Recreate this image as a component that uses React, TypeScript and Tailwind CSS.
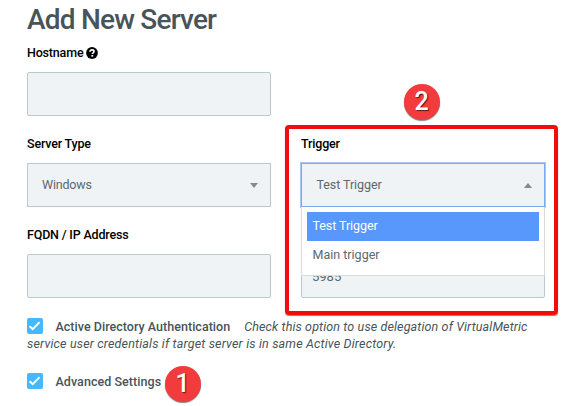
import type { ReactNode } from "react";

function Label({ children }: { children: ReactNode }) {
  return <div className="flex h-4 items-center whitespace-nowrap text-[12.5px] font-medium leading-4 tracking-[-0.18px] text-black">{children}</div>;
}

function Field({ label, children }: { label: ReactNode; children: ReactNode }) {
  return (
    <div className="flex w-[244px] flex-col gap-[11px]">
      <Label>{label}</Label>
      {children}
    </div>
  );
}

function TextBox() {
  return <div className="h-11 rounded-[2px] border border-[#b9cacf] bg-[#eff3f6]" />;
}

function Check() {
  return (
    <span className="flex size-4 shrink-0 items-center justify-center rounded-[2px] bg-[#46b8fd]">
      <svg viewBox="0 0 16 16" className="size-4" fill="none" stroke="white" strokeWidth="2">
        <path d="M2.6 8.2 5.7 11.1 12.6 4.1" />
      </svg>
    </span>
  );
}

function Badge({ children, className }: { children: ReactNode; className: string }) {
  return (
    <div
      className={`absolute flex size-9 items-center justify-center rounded-full bg-[#f23b3c] text-[25px] font-medium leading-none text-white shadow-[0_1px_1px_rgba(0,0,0,0.5)] [text-shadow:1px_1px_1px_rgba(0,0,0,0.6)] ${className}`}
    >
      <span>{children}</span>
    </div>
  );
}

export default function App() {
  return (
    <main className="relative h-[406px] w-[565px] overflow-hidden bg-white pl-[27px] font-['Roboto',sans-serif] text-[#47545a]">
      <h1 className="h-[45px] text-[28px] font-medium leading-10 tracking-[-0.8px] whitespace-nowrap">
        <span>Add New Server</span>
      </h1>

      <div className="grid grid-cols-[244px_244px] gap-x-[30px] gap-y-5">
        <div className="col-span-2">
          <Field
            label={
              <>
                <span>Hostname</span>
                <svg viewBox="0 0 12 12" className="ml-[3px] size-3">
                  <circle cx="6" cy="6" r="5.9" fill="black" />
                  <path d="M4 4.7C4.1 3.4 5 2.9 6.1 2.9c1.1 0 1.9.6 1.9 1.6 0 1.3-1.7 1.3-1.7 2.6" fill="none" stroke="white" strokeWidth="1.6" />
                  <rect x="5.4" y="8" width="1.8" height="1.6" fill="white" />
                </svg>
              </>
            }
          >
            <TextBox />
          </Field>
        </div>

        <Field label="Server Type">
          <div className="flex h-11 items-center justify-between border border-[#b9cacf] bg-[#eff3f6] pr-[12px] pl-[14px] text-[12.5px] tracking-[-0.2px] text-[#5e686c]">
            <span>Windows</span>
            <svg viewBox="0 0 8 5" className="h-[5px] w-2 fill-[#888]"><path d="M0 0h8L4 5z" /></svg>
          </div>
        </Field>

        <div className="relative">
          <Field label="Trigger">
            <div className="flex h-11 items-center justify-between border border-[#7ba9f0] bg-[#eff3f6] pr-[12px] pl-[14.5px] text-[12.5px] tracking-[-0.08px] text-[#5e686c] shadow-[0_0_0_1px_#a9c7f7]">
              <span>Test Trigger</span>
              <svg viewBox="0 0 8 5" className="h-[5px] w-2 fill-[#888]"><path d="M0 5h8L4 0z" /></svg>
            </div>
          </Field>
          <div className="absolute top-[71px] left-0 z-10 h-[69px] w-[244px] border border-t-0 border-[#d9dcde] bg-white px-[5px] pt-[5px] text-[12.5px] text-[#5e686c]">
            <div className="flex h-[29px] items-center bg-[#5897fb] pb-px pl-[5.5px] leading-4 tracking-[-0.08px] text-white"><span>Test Trigger</span></div>
            <div className="flex h-[28px] items-center pl-[5.5px] leading-4"><span>Main trigger</span></div>
          </div>
        </div>

        <Field label="FQDN / IP Address">
          <TextBox />
        </Field>
        <Field label="">
          <div className="flex h-11 items-center rounded-[2px] border border-[#b9cacf] bg-[#eff3f6] pt-[2px] pl-[10px] text-[13px] text-[#5e686c]">
            <span>5985</span>
          </div>
        </Field>
      </div>

      <div className="mt-5 h-[55px] text-[12.5px] leading-[17px] whitespace-nowrap">
        <div className="flex h-[17px]">
          <Check />
          <span className="ml-[12.5px] font-medium tracking-[0.03px]">Active Directory Authentication</span>
          <span className="ml-[14px] italic tracking-[0.13px]">Check this option to use delegation of VirtualMetric</span>
        </div>
        <div className="italic tracking-[0.17px]"><span>service user credentials if target server is in same Active Directory.</span></div>
      </div>
      <div className="flex h-[17px] text-[12.5px] font-medium leading-[17px] whitespace-nowrap">
        <Check />
        <span className="ml-[12.5px] tracking-[0.05px]">Advanced Settings</span>
      </div>

      <div className="absolute top-[125px] left-[285px] z-20 h-[190px] w-[273px] rounded-[4px] border-4 border-[#f20d0d] shadow-[0_1px_1px_rgba(0,0,0,0.5)]" />
      <Badge className="top-[83.5px] left-[403.5px]">2</Badge>
      <Badge className="top-[365.5px] left-[164.5px]">1</Badge>
    </main>
  );
}
